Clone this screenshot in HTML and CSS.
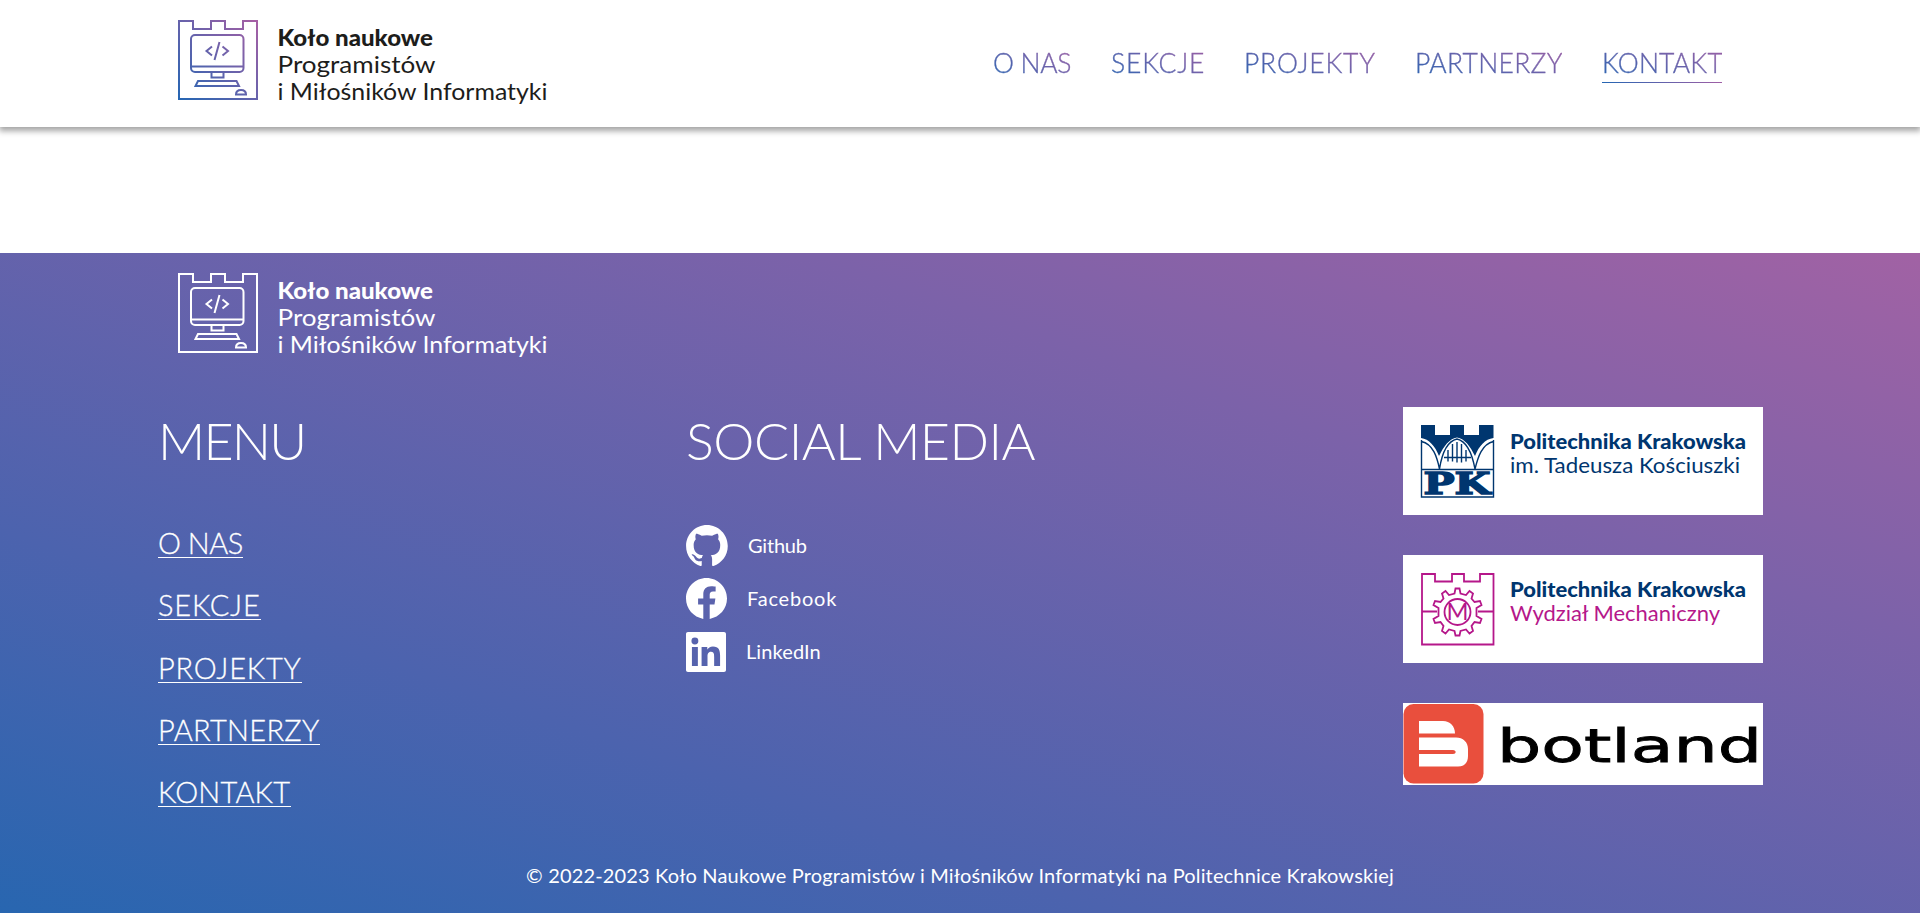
FILE: index.html
```html
<!DOCTYPE html>
<html lang="pl">
<head>
<meta charset="utf-8">
<title>Koło naukowe Programistów i Miłośników Informatyki</title>
<link rel="stylesheet" href="styles.css">
</head>
<body>
<svg class="defs" width="0" height="0" aria-hidden="true">
  <defs>
    <linearGradient id="brand" gradientUnits="userSpaceOnUse" x1="0" y1="80" x2="80" y2="0">
      <stop offset="0" stop-color="#2466b3"/><stop offset="1" stop-color="#a85fa4"/>
    </linearGradient>
    <symbol id="castle" viewBox="0 0 80 80">
      <g fill="none" stroke-width="2">
        <path d="M1 79V1H15V9H33V1H47V9H65V1H79V79Z"/>
        <rect x="13" y="15" width="52.5" height="37" rx="4"/>
        <path d="M13 46.5H65.5M33.500 52.500V57.500H45.500V52.500M20 61H58.500L61 66H17.500ZM34 26.500L28.500 31L34 35.500M44.500 26.500L50 31L44.500 35.500M41.500 22L36.500 40M58 74.500H68C68 71 65.500 70 63 70C60.500 70 58 71 58 74.500Z"/>
      </g>
    </symbol>
  </defs>
</svg>
<header class="header">
  <a class="logo" href="#">
    <svg class="logo-svg logo-color" width="370" height="88" viewBox="0 0 370 88">
      <use href="#castle" width="80" height="80"/>
      <text class="strong" x="99.500" y="26" textLength="155.500" lengthAdjust="spacingAndGlyphs">Koło naukowe</text>
      <text x="99.500" y="53" textLength="158" lengthAdjust="spacingAndGlyphs">Programistów</text>
      <text x="99.500" y="80" textLength="270" lengthAdjust="spacingAndGlyphs">i Miłośników Informatyki</text>
    </svg>
  </a>
  <nav class="nav">
    <a class="n-onas" href="#">O NAS</a>
    <a class="n-sekcje" href="#">SEKCJE</a>
    <a class="n-projekty" href="#">PROJEKTY</a>
    <a class="n-partnerzy" href="#">PARTNERZY</a>
    <a class="n-kontakt active" href="#">KONTAKT</a>
  </nav>
</header>
<footer class="footer">
  <a class="logo footer-logo" href="#">
    <svg class="logo-svg logo-white" width="370" height="88" viewBox="0 0 370 88">
      <use href="#castle" width="80" height="80"/>
      <text class="strong" x="99.500" y="26" textLength="155.500" lengthAdjust="spacingAndGlyphs">Koło naukowe</text>
      <text x="99.500" y="53" textLength="158" lengthAdjust="spacingAndGlyphs">Programistów</text>
      <text x="99.500" y="80" textLength="270" lengthAdjust="spacingAndGlyphs">i Miłośników Informatyki</text>
    </svg>
  </a>
  <div class="columns">
    <section class="menu">
      <h2 class="h-menu">MENU</h2>
      <ul>
        <li><a class="m-onas" href="#">O NAS</a></li>
        <li><a class="m-sekcje" href="#">SEKCJE</a></li>
        <li><a class="m-projekty" href="#">PROJEKTY</a></li>
        <li><a class="m-partnerzy" href="#">PARTNERZY</a></li>
        <li><a class="m-kontakt" href="#">KONTAKT</a></li>
      </ul>
    </section>
    <section class="social">
      <h2 class="h-social">SOCIAL MEDIA</h2>
      <ul>
        <li><svg width="42" height="41" viewBox="0 0 98 96"><path fill-rule="evenodd" d="M48.854 0C21.839 0 0 22 0 49.217c0 21.756 13.993 40.172 33.405 46.690 2.427.490 3.316-1.059 3.316-2.362 0-1.141-.080-5.052-.080-9.127-13.590 2.934-16.420-5.867-16.420-5.867-2.184-5.704-5.420-7.170-5.420-7.170-4.448-3.015.324-3.015.324-3.015 4.934.326 7.523 5.052 7.523 5.052 4.367 7.496 11.404 5.378 14.235 4.074.404-3.178 1.699-5.378 3.074-6.600-10.839-1.141-22.243-5.378-22.243-24.283 0-5.378 1.940-9.778 5.014-13.200-.485-1.222-2.184-6.275.486-13.038 0 0 4.125-1.304 13.426 5.052a46.970 46.970 0 0 1 12.214-1.630c4.125 0 8.330.571 12.213 1.630 9.302-6.356 13.427-5.052 13.427-5.052 2.670 6.763.970 11.816.485 13.038 3.155 3.422 5.015 7.822 5.015 13.200 0 18.905-11.404 23.060-22.324 24.283 1.780 1.548 3.316 4.481 3.316 9.126 0 6.600-.080 11.897-.080 13.526 0 1.304.890 2.853 3.316 2.364 19.412-6.520 33.405-24.935 33.405-46.691C97.707 22 75.788 0 48.854 0z"/></svg><span class="t-gh">Github</span></li>
        <li><svg width="41" height="41" viewBox="0 0 24 24"><path d="M24 12.073c0-6.627-5.373-12-12-12s-12 5.373-12 12c0 5.990 4.388 10.954 10.125 11.854v-8.385H7.078v-3.470h3.047V9.430c0-3.007 1.792-4.669 4.533-4.669 1.312 0 2.686.235 2.686.235v2.953H15.830c-1.491 0-1.956.925-1.956 1.874v2.250h3.328l-.532 3.470h-2.796v8.385C19.612 23.027 24 18.062 24 12.073z"/></svg><span class="t-fb">Facebook</span></li>
        <li><svg width="40" height="40" viewBox="0 0 24 24"><path d="M20.447 20.452h-3.554v-5.569c0-1.328-.027-3.037-1.852-3.037-1.853 0-2.136 1.445-2.136 2.939v5.667H9.351V9h3.414v1.561h.046c.477-.900 1.637-1.850 3.370-1.850 3.601 0 4.267 2.370 4.267 5.455v6.286zM5.337 7.433a2.062 2.062 0 0 1-2.063-2.065 2.064 2.064 0 1 1 2.063 2.065zm1.782 13.019H3.555V9h3.564v11.452zM22.800 0H1.200C.500 0 0 .500 0 1.200v21.600C0 23.500.500 24 1.200 24h21.600c.700 0 1.200-.500 1.200-1.200V1.200C24 .500 23.500 0 22.800 0z"/></svg><span class="t-li">LinkedIn</span></li>
      </ul>
    </section>
    <section class="partners">
      <svg class="card" width="360" height="108" viewBox="0 0 360 108">
        <g fill="#00366f">
          <path d="M18 18H32V28H47V18H61V28H76V18H90.500V31C82 32 76 39 72 49C67 39 62 32 54 30.500C46 32 41 39 36 49C32 39 26 32 18 31Z"/>
          <g fill="none" stroke="#00366f" stroke-width="1.400">
            <path d="M18.500 33V90H90.500V33M18.500 34.500C30 37 34 50 36.500 62C39 46 45 34 54 32C63 34 69 46 72 62C75 50 79 37 90.500 34.500M18.500 62.500H90.500M41 50.500H68M45 43V54.500M49.500 37V54.500M54 35V55.500M58.500 37V55.500M63 43V54.500"/>
          </g>
          <text class="pk" x="20.500" y="87" textLength="67" lengthAdjust="spacingAndGlyphs">PK</text>
        </g>
        <text class="partner-name" x="107" y="42" textLength="236" lengthAdjust="spacingAndGlyphs">Politechnika Krakowska</text>
        <text class="partner-sub" x="107" y="66" textLength="230" lengthAdjust="spacingAndGlyphs">im. Tadeusza Kościuszki</text>
      </svg>
      <svg class="card" width="360" height="108" viewBox="0 0 360 108">
        <g fill="none" stroke="#b5178a" stroke-width="1.800">
          <path d="M19 89.500V19H32V26.500H49V19H61V26.500H77V19H90.500V89.500ZM19 56.500H34M75 56.500H90.500"/>
          <circle cx="54.500" cy="57" r="13"/>
          <path d="M51.500 38.500L52.500 33.500H56.500L57.500 38.500L63 40L66.500 36L70 38.500L68.500 43.500L71.500 47L77 46L78.500 50L73.500 53V61L78.500 64L77 68L71.500 67L68.500 71L70 76L66.500 78.500L63 74.500L57.500 76L56.500 80.500H52.500L51.500 76L46 74.500L42.500 78.500L39 76L40.500 71L37.500 67L32 68L30.500 64L35.500 61V53L30.500 50L32 46L37.500 47L40.500 43.500L39 38.500L42.500 36L46 40Z"/>
        </g>
        <text class="gear-m" x="43.500" y="65" textLength="22" lengthAdjust="spacingAndGlyphs">M</text>
        <text class="partner-name" x="107" y="42" textLength="236" lengthAdjust="spacingAndGlyphs">Politechnika Krakowska</text>
        <text class="partner-sub pink" x="107" y="66" textLength="210" lengthAdjust="spacingAndGlyphs">Wydział Mechaniczny</text>
      </svg>
      <svg class="card" width="360" height="82" viewBox="0 0 360 82">
        <rect x=".500" y="1" width="80" height="79.500" rx="10" fill="#e94f3d"/>
        <path fill="#fff" d="M16 18H40C47 18 52 23 52 30.500H16ZM16 34.500H53C60 34.500 65 39 65 46V53C65 60 61 63.500 55 63.500H16V51H50C53.500 51 53.500 47 50 47H16Z"/>
        <text class="botland" x="94" y="58.500" textLength="265" lengthAdjust="spacingAndGlyphs">botland</text>
      </svg>
    </section>
  </div>
  <p class="copyright">© 2022-2023 Koło Naukowe Programistów i Miłośników Informatyki na Politechnice Krakowskiej</p>
</footer>
</body>
</html>
```
FILE: styles.css
```css
* { box-sizing: border-box; }
body { margin: 0; background: #fff; font-family: Lato, sans-serif; font-weight: 300; overflow: hidden; }
a { color: inherit; text-decoration: none; }
h2, ul, p { margin: 0; padding: 0; }
ul { list-style: none; }
.defs { display: block; }
.header {
  display: flex; justify-content: space-between; height: 127px;
  padding: 20px 198px 0 178px; background: #fff;
  box-shadow: 0 3px 6px 1px rgba(0, 0, 0, .36);
}
.logo, .logo-svg { display: block; }
.logo-svg { font: 400 22.500px Lato, sans-serif; }
.strong { font-weight: 900; }
.logo-color { fill: #1d1d1b; }
.logo-color use { stroke: url(#brand); }
.logo-white { fill: #fff; }
.logo-white use { stroke: #fff; }
.nav { display: flex; gap: 40px; padding-top: 22px; }
.nav a {
  height: 41px; padding-top: 1px; font-size: 26.500px; line-height: 40px; white-space: nowrap;
  -webkit-text-stroke: .35px transparent;
  background: linear-gradient(to top right, #2466b3, #a55fa4);
  -webkit-background-clip: text; background-clip: text; color: transparent;
}
.nav .active { border-bottom: 1px solid; border-image: linear-gradient(90deg, #2466b3, #a05fa5) 1; }
.n-onas { width: 78px; letter-spacing: -.3px; }
.n-sekcje { width: 93px; letter-spacing: .8px; }
.n-projekty { width: 131px; letter-spacing: .8px; }
.n-partnerzy { width: 147px; letter-spacing: .3px; }
.n-kontakt { width: 120px; letter-spacing: .2px; }
.footer {
  height: 660px; margin-top: 126px; padding-top: 20px; color: #fff;
  background: linear-gradient(to top right, #2866b0, #4c63ae 29%, #7c62a9 71%, #a162a4);
}
.footer-logo { width: 370px; margin-left: 178px; }
.columns { display: flex; height: 440px; padding: 46px 157px 0 158px; }
h2 { height: 70px; font-size: 52px; font-weight: 300; line-height: 66px; white-space: nowrap; }
.h-menu { letter-spacing: -1.8px; }
.h-social { letter-spacing: -.5px; }
.menu { width: 528px; }
.menu ul { display: flex; flex-direction: column; padding-top: 46px; }
.menu li { height: 62.300px; }
.menu a { display: inline-block; height: 35px; line-height: 40px; font-size: 29px; border-bottom: 1px solid #fff; white-space: nowrap; -webkit-text-stroke: .3px #fff; }
.m-onas { width: 85px; letter-spacing: -.5px; }
.m-sekcje { width: 103px; letter-spacing: .8px; }
.m-projekty { width: 144px; letter-spacing: .8px; }
.m-partnerzy { width: 162px; letter-spacing: .3px; }
.m-kontakt { width: 133px; letter-spacing: .2px; }
.social { width: 717px; }
.social ul { display: flex; flex-direction: column; gap: 12px; padding-top: 48px; }
.social li { display: flex; align-items: center; gap: 20px; height: 41px; font-size: 20px; font-weight: 400; }
.social span { padding-bottom: 2px; }
.social svg { fill: #fff; }
.t-gh { letter-spacing: -.2px; }
.t-fb { letter-spacing: .8px; }
.t-li { letter-spacing: .1px; }
.partners { display: flex; flex-direction: column; gap: 40px; }
.card { display: block; background: #fff; flex: none; }
.partner-name { font: 900 21px Lato, sans-serif; fill: #00366f; }
.partner-sub { font: 400 21px Lato, sans-serif; fill: #00366f; }
.pink { fill: #b5178a; }
.pk { font: bold 30px "DejaVu Serif", serif; stroke: #00366f; stroke-width: 1.500; }
.gear-m { font: 400 23px Lato, sans-serif; fill: #b5178a; }
.botland { font: 400 47px "DejaVu Sans", sans-serif; fill: #000; stroke: #000; stroke-width: .8; }
.copyright { padding-top: 62px; font-size: 20px; font-weight: 400; line-height: 24px; letter-spacing: .16px; text-align: center; white-space: nowrap; }
```
